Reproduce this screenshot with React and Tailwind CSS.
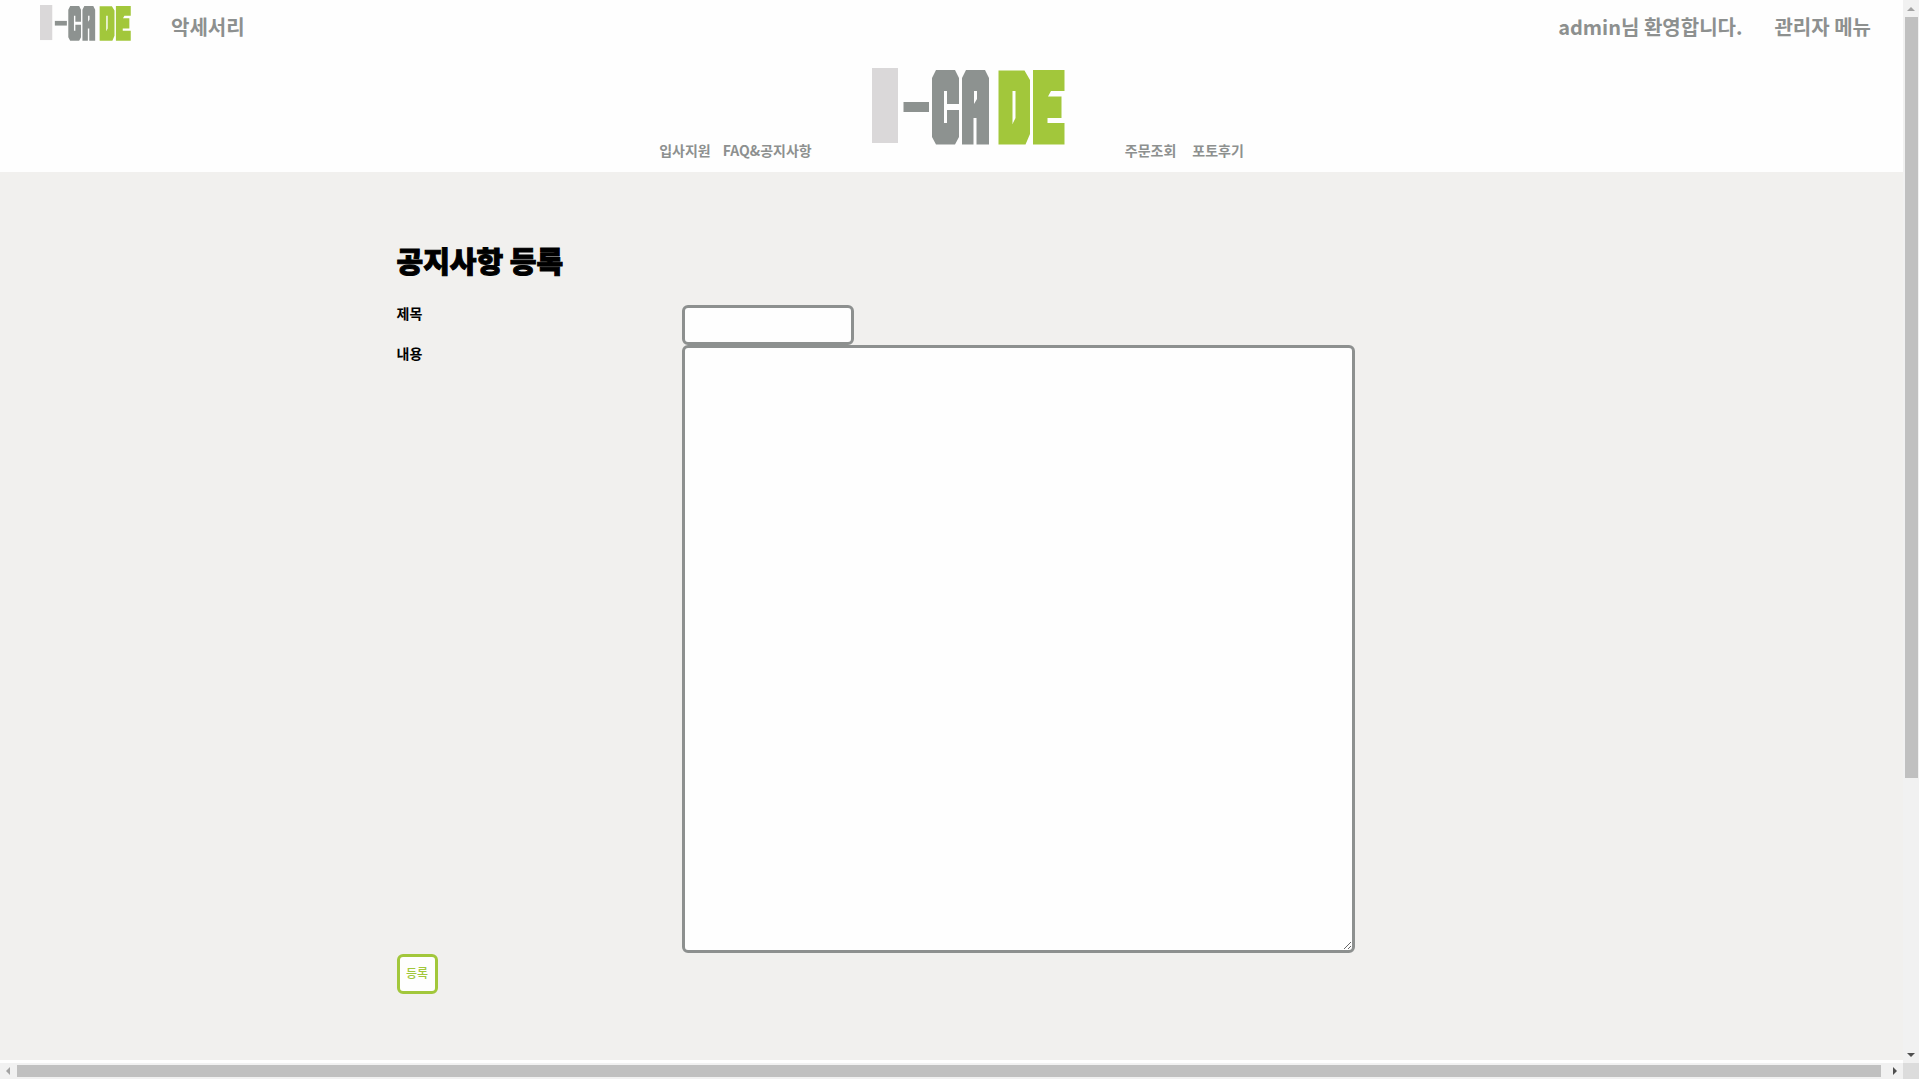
import React from "react";

function Logo({ className }) {
  return (
    <svg viewBox="0 0 193 77" preserveAspectRatio="none" className={className} role="img" aria-label="I-CADE">
      <rect x="0" y="0" width="26" height="75" fill="#dad8d9" />
      <rect x="31.5" y="34" width="25.5" height="10" fill="#8d9290" />
      <path
        fill="#8d9290"
        d="M64 2H83L87 10V36H75V23H72V55H75V42H87V69L83 76.5H64L60 69V10Z"
      />
      <path
        fill="#8d9290"
        fillRule="evenodd"
        d="M94 2H113L117 10V76.5H104.500V50H101.500V76.500H90V10ZM102 23V36L105 31V23Z"
      />
      <path
        fill="#a2c73b"
        fillRule="evenodd"
        d="M126.500 2.500H152.500L158 12V66L153.500 76.500H126.500ZM140.500 23V56L143.500 50V23Z"
      />
      <path fill="#a2c73b" d="M161 2H192.500V23H179L176 28.500H189.500V50H175.500V55H192.500V76.500H161Z" />
    </svg>
  );
}

function NavLink({ children }) {
  return (
    <a href="#" className="whitespace-nowrap">
      {children}
    </a>
  );
}

function Header() {
  return (
    <header className="bg-[#fefefe] font-bold text-[#8d908f]">
      <nav className="flex h-[54px] items-center justify-between pr-8 pl-10 text-xl">
        <div className="flex items-center gap-10">
          <a href="#">
            <Logo className="mb-2 h-9 w-[91px]" />
          </a>
          <NavLink>악세서리</NavLink>
        </div>
        <div className="flex items-center gap-8">
          <NavLink>admin님 환영합니다.</NavLink>
          <NavLink>관리자 메뉴</NavLink>
        </div>
      </nav>
      <nav className="flex h-[118px] items-start justify-center gap-[60px] pt-3.5 text-sm">
        <div className="flex gap-3 pt-18">
          <NavLink>입사지원</NavLink>
          <NavLink>FAQ&amp;공지사항</NavLink>
        </div>
        <a href="#">
          <Logo className="h-[77px] w-[193px]" />
        </a>
        <div className="flex gap-4 pt-18">
          <NavLink>주문조회</NavLink>
          <NavLink>포토후기</NavLink>
        </div>
      </nav>
    </header>
  );
}

function NoticeForm() {
  return (
    <main className="mx-auto w-full max-w-[1140px] px-[15px] pt-[68px]">
      <h1 className="text-[29px] leading-10 font-black [-webkit-text-stroke:1px_black]">공지사항 등록</h1>
      <form className="mt-[25px] text-sm" onSubmit={(e) => e.preventDefault()}>
        <div className="flex">
          <label htmlFor="title" className="w-[285px] leading-4 font-bold">
            제목
          </label>
          <input
            id="title"
            type="text"
            className="h-10 w-[172px] rounded-md border-3 border-[#8d908f] bg-[#fefefe] px-2 outline-none"
          />
        </div>
        <div className="flex">
          <label htmlFor="content" className="w-[285px] leading-4 font-bold">
            내용
          </label>
          <textarea
            id="content"
            className="h-[608px] w-[673px] rounded-md border-3 border-[#8d908f] bg-[#fefefe] p-2 outline-none"
          />
        </div>
        <button
          type="submit"
          className="mt-px flex h-10 w-[41px] items-center justify-center rounded-md border-3 border-[#a2c73b] bg-[#fefefe] pb-0.5 text-xs font-medium text-[#a2c73b]"
        >
          등록
        </button>
      </form>
    </main>
  );
}

function Arrow({ points, fill }) {
  return (
    <svg viewBox="0 0 16 16" className="size-4 shrink-0" aria-hidden="true">
      <polygon points={points} fill={fill} />
    </svg>
  );
}

export default function App() {
  return (
    <div className="grid h-screen grid-cols-[minmax(0,1fr)_16px] grid-rows-[minmax(0,1fr)_16px] bg-[#f1f0ee] font-['Noto_Sans_CJK_KR',sans-serif] text-black">
      <div className="overflow-hidden border-b-3 border-[#fefefe]">
        <Header />
        <NoticeForm />
      </div>
      <div className="flex flex-col bg-[#f1f1f1]">
        <Arrow points="4,11 12,11 8,7" fill="#a3a3a3" />
        <div className="mt-px ml-0.5 mr-px h-[761px] bg-[#c0c0c0]" />
        <div className="grow" />
        <Arrow points="4,6 12,6 8,10" fill="#505050" />
      </div>
      <div className="flex bg-[#f1f1f1]">
        <Arrow points="10,4 10,12 6,8" fill="#a3a3a3" />
        <div className="my-0.5 mr-1.5 ml-px grow bg-[#c0c0c0]" />
        <Arrow points="6,4 6,12 10,8" fill="#505050" />
      </div>
      <div className="bg-[#dcdcdc]" />
    </div>
  );
}
